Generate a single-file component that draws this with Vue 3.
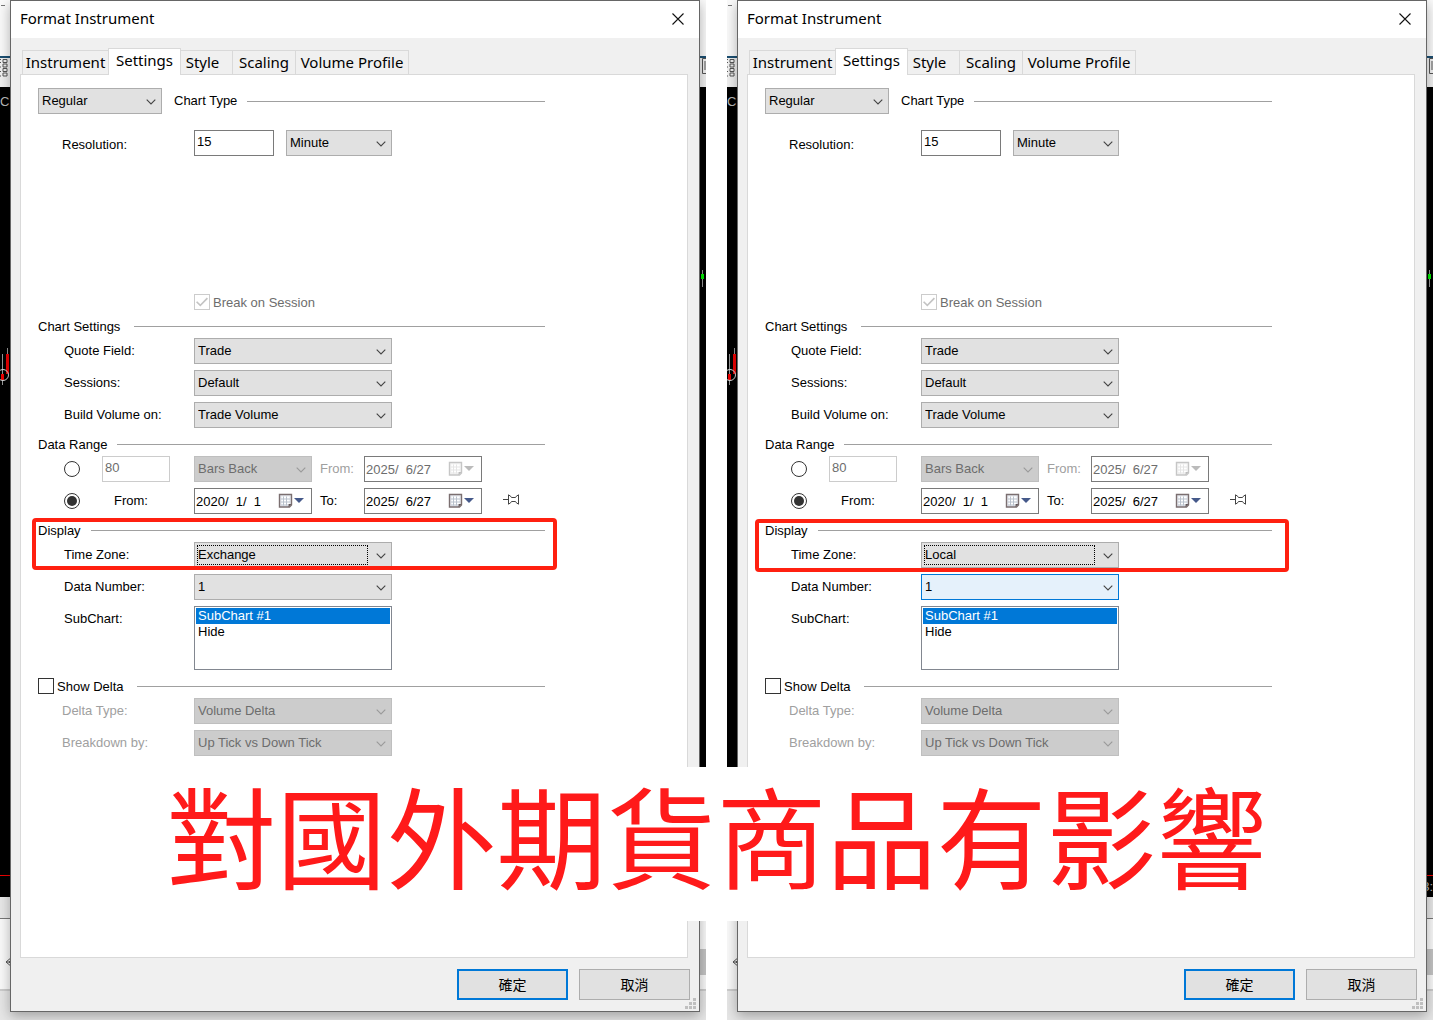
<template>
  <main class="page">
    <svg class="symbols" aria-hidden="true">
      <symbol id="chevron" viewBox="0 0 10 6">
        <path d="M0.7 0.7 L5 5 L9.3 0.7" fill="none" stroke="currentColor" stroke-width="1.1" />
      </symbol>
      <symbol id="calendar" viewBox="0 0 26 17">
        <path d="M1.5 1.5h12v10.500l-2 2h-10z" fill="#e4e7ee" stroke="#7b6f70" stroke-width="1.4" />
        <path d="M3.5 3.5h8v9h-8z" fill="#fff" />
        <path d="M3 6h9M3 9h9M3 12h7M5.5 3.5v9M8.5 3.5v9" stroke="#b9c1cc" fill="none" />
        <path d="M10.5 14v-3h3z" fill="#5f5457" />
        <path d="M16 5h10L21 10z" fill="#45598a" />
      </symbol>
    </svg>

    <section v-for="shot in shots" :key="shot.id" class="shot">
      <div class="backdrop" aria-hidden="true">
        <div class="app-bar"><i class="dash"></i></div>
        <div class="tool-bar">
          <svg width="11" height="19" viewBox="0 0 11 19">
            <path d="M0 1.5h1M3 1.5h4v3h-4zM3 6h4v3h-4zM3 10.5h4v3h-4zM3 15h4v3h-4zM0 4.5h1M0 9h1M0 13.5h1M0 18h1" fill="none" stroke="#555" />
          </svg>
          <svg width="4" height="16" viewBox="0 0 4 16">
            <path d="M4 .5H.5v15H4M3 3v9" fill="none" stroke="#555" />
          </svg>
        </div>
        <div class="chart">
          <span class="symbol-name">CE</span>
          <svg class="candles-left" width="10" height="40" viewBox="0 0 10 40">
            <path d="M2.5 6v31M7.5 0v8" stroke="#999" />
            <path d="M1 26h3v6H1zM6 6h3v20H6z" fill="#f00000" />
            <circle cx="3" cy="27" r="5.5" fill="none" stroke="#ddd" />
          </svg>
          <svg class="candle-right" width="6" height="18" viewBox="0 0 6 18">
            <path d="M2.5 0v17" stroke="#999" />
            <path d="M1 4h3v5H1z" fill="#00f000" />
          </svg>
          <span v-if="shot.clock" class="time-mark">{{ shot.clock }}</span>
        </div>
        <div class="gutter"></div>
        <div class="scroll-row">
          <svg width="8" height="12" viewBox="0 0 8 12">
            <path d="M7 1L1 6l6 5M1 6h7M7 3L4 6l3 3" fill="none" stroke="#555" />
          </svg>
          <span class="scroll-thumb"></span>
        </div>
        <div class="status"></div>
      </div>

      <div class="dialog" role="dialog" aria-label="Format Instrument">
        <header class="title-bar">
          <span>Format Instrument</span>
          <button class="close" type="button" aria-label="Close">
            <svg width="12" height="12" viewBox="0 0 12 12">
              <path d="M.5.5l11 11M11.5.5l-11 11" stroke="#111" stroke-width="1.1" />
            </svg>
          </button>
        </header>

        <nav class="tabs" role="tablist">
          <button
            v-for="tab in tabs"
            :key="tab"
            type="button"
            role="tab"
            class="tab"
            :class="['tab-' + tab.split(' ')[0].toLowerCase(), { active: tab === 'Settings' }]"
            :aria-selected="tab === 'Settings'"
          >{{ tab }}</button>
        </nav>

        <form class="panel" @submit.prevent>
          <div class="section">
            <div class="chart-type">
              <span class="select type-select">
                <select :id="shot.id + '-type'"><option>Regular</option></select>
                <svg><use href="#chevron" /></svg>
              </span>
              <label :for="shot.id + '-type'">Chart Type</label>
              <i class="rule"></i>
            </div>

            <div class="row outdent resolution">
              <label :for="shot.id + '-res'">Resolution:</label>
              <input :id="shot.id + '-res'" class="text res-value" type="text" value="15" />
              <span class="select unit-select">
                <select aria-label="Resolution unit"><option>Minute</option></select>
                <svg><use href="#chevron" /></svg>
              </span>
            </div>

            <label class="check break-session">
              <input type="checkbox" checked disabled />
              <span>Break on Session</span>
            </label>

            <div class="heading spaced"><span>Chart Settings</span><i class="rule"></i></div>
            <div v-for="field in chartFields" :key="field.key" class="row">
              <label :for="shot.id + field.key">{{ field.label }}</label>
              <span class="select wide">
                <select :id="shot.id + field.key"><option>{{ field.value }}</option></select>
                <svg><use href="#chevron" /></svg>
              </span>
            </div>

            <div class="heading"><span>Data Range</span><i class="rule"></i></div>
            <div class="range">
              <input type="radio" :name="shot.id + '-range'" aria-label="Bars back" />
              <input class="text bars" type="text" value="80" aria-label="Bars" disabled />
              <span class="select half">
                <select aria-label="Range unit" disabled><option>Bars Back</option></select>
                <svg><use href="#chevron" /></svg>
              </span>
              <label class="muted" :for="shot.id + '-back'">From:</label>
              <span class="date off">
                <input :id="shot.id + '-back'" type="text" value="2025/  6/27" disabled />
                <button type="button" aria-label="Open calendar" disabled><svg><use href="#calendar" /></svg></button>
              </span>
            </div>
            <div class="range">
              <input type="radio" :name="shot.id + '-range'" aria-label="From date" checked />
              <label class="from" :for="shot.id + '-from'">From:</label>
              <span class="date">
                <input :id="shot.id + '-from'" type="text" value="2020/  1/  1" />
                <button type="button" aria-label="Open calendar"><svg><use href="#calendar" /></svg></button>
              </span>
              <label :for="shot.id + '-to'">To:</label>
              <span class="date">
                <input :id="shot.id + '-to'" type="text" value="2025/  6/27" />
                <button type="button" aria-label="Open calendar"><svg><use href="#calendar" /></svg></button>
              </span>
              <button class="pin" type="button" aria-label="Pin">
                <svg width="17" height="11" viewBox="0 0 17 11">
                  <path d="M0 5.5h5M5.5 .5v10M5.5 1.5h1.5l1.5 2h4l1.5-2H16M5.5 9.5h1.5l1.5-2h4l1.5 2H16M15.5 .5v10" fill="none" stroke="#444" />
                </svg>
              </button>
            </div>

            <div class="marked" :class="shot.id">
              <div class="heading"><span>Display</span><i class="rule"></i></div>
              <div class="row">
                <label :for="shot.id + '-zone'">Time Zone:</label>
                <span class="select wide focused">
                  <select :id="shot.id + '-zone'"><option>{{ shot.zone }}</option></select>
                  <svg><use href="#chevron" /></svg>
                </span>
              </div>
            </div>
            <div class="row">
              <label :for="shot.id + '-num'">Data Number:</label>
              <span class="select wide" :class="{ hot: shot.hot }">
                <select :id="shot.id + '-num'"><option>1</option></select>
                <svg><use href="#chevron" /></svg>
              </span>
            </div>
            <div class="row">
              <label :for="shot.id + '-sub'">SubChart:</label>
              <select :id="shot.id + '-sub'" class="list" size="3">
                <option selected>SubChart #1</option>
                <option>Hide</option>
              </select>
            </div>

            <div class="heading spaced">
              <label class="check"><input type="checkbox" /><span>Show Delta</span></label>
              <i class="rule"></i>
            </div>
            <div v-for="field in deltaFields" :key="field.key" class="row outdent">
              <label class="muted" :for="shot.id + field.key">{{ field.label }}</label>
              <span class="select wide">
                <select :id="shot.id + field.key" disabled><option>{{ field.value }}</option></select>
                <svg><use href="#chevron" /></svg>
              </span>
            </div>
          </div>
        </form>

        <footer class="actions">
          <button class="btn primary" type="button">確定</button>
          <button class="btn" type="button">取消</button>
          <svg class="grip" width="11" height="11" viewBox="0 0 11 11" aria-hidden="true">
            <path d="M8 0h3v3H8zM4 4h3v3H4zM8 4h3v3H8zM0 8h3v3H0zM4 8h3v3H4zM8 8h3v3H8z" fill="#bfbfbf" />
          </svg>
        </footer>
      </div>
    </section>

    <p class="banner">對國外期貨商品有影響</p>
  </main>
</template>

<script setup>
const shots = [
  { id: "exchange", zone: "Exchange", hot: false, clock: "" },
  { id: "local", zone: "Local", hot: true, clock: "3:" },
]

const tabs = ["Instrument", "Settings", "Style", "Scaling", "Volume Profile"]

const chartFields = [
  { key: "-quote", label: "Quote Field:", value: "Trade" },
  { key: "-sessions", label: "Sessions:", value: "Default" },
  { key: "-volume", label: "Build Volume on:", value: "Trade Volume" },
]

const deltaFields = [
  { key: "-delta", label: "Delta Type:", value: "Volume Delta" },
  { key: "-breakdown", label: "Breakdown by:", value: "Up Tick vs Down Tick" },
]
</script>

<style>
body {
  margin: 0;
  background: #fff;
}
</style>

<style scoped>
* {
  box-sizing: border-box;
}

.page {
  position: relative;
  display: flex;
  gap: 21px;
  min-height: 100vh;
  font: 13px/16px "Liberation Sans", Arial, sans-serif;
  color: #000;
}

.symbols {
  position: absolute;
  width: 0;
  height: 0;
}

button,
input,
select {
  margin: 0;
  font: inherit;
  color: inherit;
}

button {
  padding: 0;
  border: none;
  background: none;
}

.shot {
  flex: 1;
  display: grid;
  min-width: 0;
  overflow: hidden;
}

.backdrop,
.dialog {
  grid-area: 1 / 1;
  min-width: 0;
}

/* application window seen behind the dialog */
.backdrop {
  display: flex;
  flex-direction: column;
  background: #f0f0f0;
}

.app-bar {
  height: 56px;
  padding: 5px 1px;
  background: #fafafa;
}

.dash {
  display: block;
  width: 4px;
  height: 1px;
  background: #777;
}

.tool-bar {
  display: flex;
  justify-content: space-between;
  height: 31px;
  border-top: 2px solid #1b4f72;
}

.chart {
  position: relative;
  flex: 1;
  background: #000;
  color: #bbb;
}

.chart::after {
  content: "";
  position: absolute;
  left: 0;
  right: 0;
  bottom: 21px;
  height: 1px;
  background: #f00000;
}

.symbol-name {
  position: absolute;
  left: 0;
  top: 7px;
}

.candles-left {
  position: absolute;
  left: 0;
  top: 261px;
}

.candle-right {
  position: absolute;
  right: 0;
  top: 183px;
}

.time-mark {
  position: absolute;
  right: 0;
  bottom: 2px;
}

.gutter {
  height: 22px;
  background: #e8e8e8;
  border-bottom: 1px solid #777;
}

.scroll-row {
  display: flex;
  justify-content: space-between;
  align-items: center;
  height: 70px;
  padding: 16px 0 0 5px;
  background: #fafafa;
}

.scroll-thumb {
  width: 20px;
  height: 26px;
  background: #c4c4c4;
}

.status {
  height: 31px;
  border-top: 2px solid #ccc;
  background: #e6e6e6;
}

.dialog {
  position: relative;
  z-index: 1;
  display: flex;
  flex-direction: column;
  margin: 0 6px 8px 10px;
  border: 1px solid #666;
  background: #f0f0f0;
  box-shadow: 0 4px 12px rgba(0, 0, 0, 0.3);
}

.title-bar {
  display: flex;
  align-items: center;
  justify-content: space-between;
  height: 37px;
  padding: 0 15px 0 9px;
  background: #fff;
  font: 15px/20px "Noto Sans", "Open Sans", sans-serif;
}

.title-bar span {
  padding-bottom: 3px;
}

.close {
  display: flex;
  padding-bottom: 2px;
}

.tabs {
  display: flex;
  align-items: flex-end;
  height: 36px;
  padding: 0 11px;
}

.tab {
  height: 24px;
  padding-bottom: 2px;
  border: 1px solid #d9d9d9;
  border-bottom: none;
  border-left: none;
  font: 15px/20px "Noto Sans", "Open Sans", sans-serif;
  white-space: nowrap;
}

.tab.active {
  z-index: 1;
  height: 27px;
  margin-bottom: -1px;
  padding-bottom: 4px;
  background: #fff;
}

.tab-instrument {
  width: 86px;
  border-left: 1px solid #d9d9d9;
  border-right: none;
}

.tab-settings {
  width: 73px;
  border-left: 1px solid #d9d9d9;
}

.tab-style {
  width: 52px;
  padding-right: 8px;
}

.tab-scaling {
  width: 63px;
}

.tab-volume {
  width: 113px;
}

.panel {
  flex: 1;
  margin: 0 11px 0 9px;
  padding: 13px 17px;
  border: 1px solid #d9d9d9;
  background: #fff;
}

.section {
  max-width: 507px;
}

.rule {
  flex: 1;
  height: 1px;
  background: #a0a0a0;
}

.chart-type {
  display: flex;
  align-items: center;
  height: 26px;
  margin-bottom: 16px;
}

.chart-type label {
  margin: 0 10px 0 12px;
}

.row {
  display: flex;
  align-items: flex-start;
  padding: 0 0 6px 26px;
}

.row > label {
  width: 130px;
  line-height: 26px;
}

.row.outdent {
  padding-left: 24px;
}

.row.outdent > label {
  width: 132px;
}

.resolution {
  margin-bottom: 130px;
}

.row.resolution > label {
  line-height: 30px;
  margin-bottom: -2px;
}

.muted {
  color: #a0a0a0;
}

.select {
  position: relative;
  display: block;
  height: 26px;
}

.select select {
  display: block;
  width: 100%;
  height: 26px;
  padding: 0 24px 0 3px;
  border: 1px solid #adadad;
  border-radius: 0;
  background: #e1e1e1;
  appearance: none;
  outline: none;
}

.select svg {
  position: absolute;
  right: 6px;
  top: 11px;
  width: 10px;
  height: 6px;
  color: #444;
  pointer-events: none;
}

.select select:disabled {
  border-color: #bfbfbf;
  background: #ccc;
  color: #6d6d6d;
  opacity: 1;
}

.select select:disabled + svg {
  color: #9a9a9a;
}

.type-select {
  width: 124px;
}

.unit-select {
  width: 106px;
  margin-left: 12px;
}

.wide {
  width: 198px;
}

.half {
  width: 118px;
}

.focused::after {
  content: "";
  position: absolute;
  inset: 3px 24px 3px 3px;
  border: 1px dotted #000;
  pointer-events: none;
}

.hot select {
  border-color: #0078d7;
  background: #e5f1fb;
}

.text {
  height: 26px;
  padding: 0 2px 3px;
  border: 1px solid #7a7a7a;
  background: #fff;
  outline: none;
}

.text:disabled {
  border-color: #ccc;
  color: #6d6d6d;
}

.res-value {
  width: 80px;
}

.check {
  display: flex;
  align-items: center;
  gap: 3px;
  height: 16px;
}

.check span,
.heading > span {
  padding-top: 2px;
}

.check input {
  display: block;
  width: 16px;
  height: 16px;
  border: 1px solid #333;
  background: #fff;
  appearance: none;
}

.check input:disabled {
  border-color: #ccc;
}

.check input:checked::before {
  content: "";
  display: block;
  width: 12px;
  height: 12px;
  margin: 1px;
  background: #c4c4c4;
  clip-path: polygon(0 53%, 10% 43%, 36% 69%, 90% 12%, 100% 22%, 36% 88%);
}

.break-session {
  margin: 0 0 6px 156px;
  color: #6d6d6d;
}

.heading {
  display: flex;
  align-items: center;
  gap: 10px;
  height: 20px;
  margin-bottom: 2px;
}

.heading.spaced {
  gap: 14px;
}

.range {
  display: flex;
  align-items: flex-start;
  padding: 0 0 6px 26px;
}

.range input[type="radio"] {
  width: 16px;
  height: 16px;
  margin: 5px 22px 0 0;
  padding: 2px;
  border: 1px solid #333;
  border-radius: 50%;
  background: #fff;
  appearance: none;
}

.range input[type="radio"]:checked::before {
  content: "";
  display: block;
  width: 10px;
  height: 10px;
  border-radius: 50%;
  background: #333;
}

.bars {
  width: 68px;
  margin-right: 24px;
}

.range label {
  width: 52px;
  padding-left: 8px;
  line-height: 26px;
}

.range .from {
  width: 92px;
  padding-left: 12px;
}

.date {
  display: flex;
  align-items: center;
  width: 118px;
  height: 26px;
  padding: 0 7px 0 1px;
  border: 1px solid #7a7a7a;
  background: #fff;
}

.date input {
  flex: 1;
  min-width: 0;
  padding: 2px 0 0;
  border: none;
  background: none;
  outline: none;
}

.date button {
  display: flex;
}

.date svg {
  width: 26px;
  height: 17px;
}

.off input {
  color: #6d6d6d;
}

.off svg {
  opacity: 0.4;
  filter: grayscale(1);
}

.pin {
  display: flex;
  margin: 6px 0 0 21px;
}

/* red frame around the Display settings */
.marked {
  position: relative;
}

.marked::after {
  content: "";
  position: absolute;
  inset: -2px -12px 4px -6px;
  border: 4px solid #ff2010;
  border-radius: 4px;
  pointer-events: none;
}

.marked.local::after {
  inset: -1px -17px 2px -10px;
}

.list {
  width: 198px;
  height: 64px;
  padding: 1px;
  border: 1px solid #828790;
  border-radius: 0;
  background: #fff;
  outline: none;
  overflow: hidden;
}

.list option {
  min-height: 16px;
  padding: 0 2px;
  line-height: 16px;
}

.list option:checked {
  background: linear-gradient(#0078d7, #0078d7);
  -webkit-text-fill-color: #fff;
}

.actions {
  position: relative;
  display: flex;
  justify-content: flex-end;
  gap: 11px;
  padding: 11px 9px;
}

.btn {
  width: 111px;
  height: 31px;
  padding-bottom: 2px;
  border: 1px solid #adadad;
  background: #e1e1e1;
  font: 14px/20px "Noto Sans CJK TC", sans-serif;
}

.btn.primary {
  border: 2px solid #0078d7;
}

.grip {
  position: absolute;
  right: 3px;
  bottom: 2px;
}

.banner {
  position: absolute;
  top: 767px;
  left: 7%;
  right: 7%;
  z-index: 2;
  height: 154px;
  margin: 0;
  background: #fff;
  color: #ff1a1a;
  font: 400 110px/132px "Noto Sans CJK TC", sans-serif;
  text-align: center;
  white-space: nowrap;
}
</style>
